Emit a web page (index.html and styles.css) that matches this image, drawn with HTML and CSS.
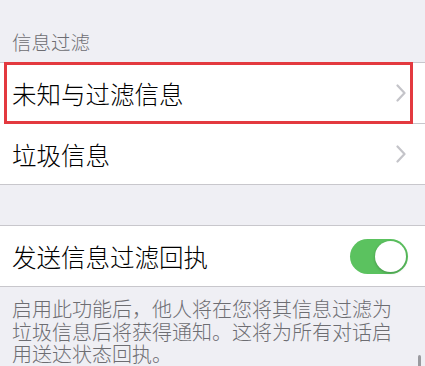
FILE: index.html
```html
<!DOCTYPE html>
<html lang="zh-CN">
<head>
  <meta charset="UTF-8" />
  <title>信息过滤</title>
  <link rel="stylesheet" href="styles.css">
</head>
<body>
  <div class="group-title">信息过滤</div>

  <div class="group">
    <div class="cell">
      <span class="cell-label">未知与过滤信息</span>
      <svg class="chevron" width="10" height="18" viewBox="0 0 10 18">
        <path d="M1.5 1.5 L8.5 9 L1.5 16.5" fill="none" stroke="#c4c4c9" stroke-width="2.2" stroke-linecap="round" stroke-linejoin="round"/>
      </svg>
      <div class="highlight"></div>
    </div>
    <div class="cell">
      <span class="cell-label">垃圾信息</span>
      <svg class="chevron" width="10" height="18" viewBox="0 0 10 18">
        <path d="M1.5 1.5 L8.5 9 L1.5 16.5" fill="none" stroke="#c4c4c9" stroke-width="2.2" stroke-linecap="round" stroke-linejoin="round"/>
      </svg>
    </div>
  </div>

  <div class="group spaced">
    <div class="cell">
      <span class="cell-label">发送信息过滤回执</span>
      <div class="switch on"><div class="knob"></div></div>
    </div>
  </div>

  <div class="group-footer">启用此功能后，他人将在您将其信息过滤为垃圾信息后将获得通知。这将为所有对话启用送达状态回执。</div>

  <div class="scroll-indicator"></div>
</body>
</html>
```

FILE: styles.css
```css
:root {
  --bg: #efeff4;
  --line: #c8c7cc;
  --muted: #6d6d72;
  --green: #5bc25f;
}

body {
  margin: 0;
  width: 425px;
  height: 366px;
  overflow: hidden;
  position: relative;
  background-color: var(--bg);
  font-family: "Noto Sans CJK SC", "Noto Sans", sans-serif;
  font-weight: 300;
  color: #000;
}

.group-title {
  padding: 30px 12px 8px;
  height: 24px;
  line-height: 24px;
  font-size: 19.5px;
  color: var(--muted);
}

.group {
  background-color: #fff;
  border-top: 1px solid var(--line);
  border-bottom: 1px solid var(--line);
}

.group.spaced {
  margin-top: 40px;
}

.cell {
  position: relative;
  display: flex;
  align-items: center;
  height: 60px;
  margin-left: 12px;
  padding-right: 19px;
  border-bottom: 1px solid var(--line);
}

.cell:last-child {
  border-bottom: none;
}

.cell-label {
  flex: 1;
  font-size: 24.5px;
}

.chevron {
  display: block;
}

/* red annotation box over the first row */
.highlight {
  position: absolute;
  top: -1px;
  left: -8px;
  right: 12px;
  bottom: -1px;
  border: 3px solid #e3393f;
  pointer-events: none;
}

.switch {
  width: 58px;
  height: 35px;
  border-radius: 18px;
  background-color: #e5e5ea;
  margin-right: -2px;
  position: relative;
}

.switch.on {
  background-color: var(--green);
}

.knob {
  position: absolute;
  top: 2px;
  right: 2px;
  width: 31px;
  height: 31px;
  border-radius: 50%;
  background-color: #fff;
  box-shadow: 0 1px 3px rgba(0, 0, 0, 0.25);
}

.group-footer {
  padding: 11px 28px 0 12px;
  font-size: 20px;
  line-height: 22.5px;
  color: var(--muted);
}

.scroll-indicator {
  position: absolute;
  right: 4px;
  top: 355px;
  width: 3px;
  height: 20px;
  border-radius: 2px;
  background-color: #9a9a9f;
}
```
